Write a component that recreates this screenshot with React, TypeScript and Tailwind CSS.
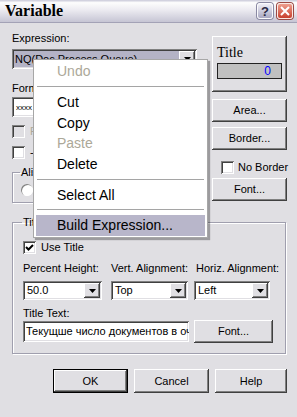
import React from 'react'

const raised =
  'shadow-[inset_-1px_-1px_0_#404040,inset_1px_1px_0_#ffffff,inset_-2px_-2px_0_#808080,inset_2px_2px_0_#e0dfe3]'
const sunken =
  'shadow-[inset_1px_1px_0_#808080,inset_-1px_-1px_0_#ffffff,inset_2px_2px_0_#404040,inset_-2px_-2px_0_#e0dfe3]'

function Button({ label, className = '' }: { label: string; className?: string }) {
  return (
    <div className={`flex h-[23px] items-center justify-center bg-[#e0dfe3] ${raised} ${className}`}>
      {label}
    </div>
  )
}

function Arrow() {
  return (
    <div className={`flex h-full w-[16px] items-center justify-center bg-[#e0dfe3] ${raised}`}>
      <svg width="7" height="4" viewBox="0 0 7 4">
        <path d="M0 0h7L3.5 4z" fill="#000" />
      </svg>
    </div>
  )
}

function Combo({ value, className = '' }: { value: string; className?: string }) {
  return (
    <div className={`flex h-[19px] bg-white p-[2px] ${sunken} ${className}`}>
      <div className="flex flex-1 items-center pl-[2px]">{value}</div>
      <Arrow />
    </div>
  )
}

function Check({ checked = false, disabled = false }: { checked?: boolean; disabled?: boolean }) {
  return (
    <div
      className={`flex h-[13px] w-[13px] shrink-0 items-center justify-center ${
        disabled ? 'bg-[#e0dfe3]' : 'bg-white'
      } ${sunken}`}
    >
      {checked && (
        <svg width="9" height="9" viewBox="0 0 9 9">
          <path d="M1 4l2.5 2.5L8 2" stroke="#000" strokeWidth="2" fill="none" />
        </svg>
      )}
    </div>
  )
}

function MenuItem({ label, disabled = false, active = false }: { label: string; disabled?: boolean; active?: boolean }) {
  return (
    <div
      className={`mx-[2px] flex h-[20.67px] items-center pl-[21px] ${disabled ? 'text-[#aca899]' : 'text-black'} ${
        active ? 'bg-[#b8b6ca]' : ''
      }`}
    >
      {label}
    </div>
  )
}

function Sep() {
  return (
    <div className="flex h-[10px] items-center px-[3px]">
      <div className="h-px w-full bg-[#a5a5a5]" />
    </div>
  )
}

export default function App() {
  return (
    <div className="relative h-[417px] w-[297px] overflow-hidden bg-[#e0dfe3] font-['Liberation_Sans',Arial,sans-serif] text-[11px] leading-[13px] text-black">
      {/* title bar */}
      <div className="flex h-[23px] items-center justify-between border-b border-[#a3a2b6] bg-[linear-gradient(#c8c8d8,#fdfdfd_12%,#ecebf1_45%,#c6c5d4)] pl-[5px] pr-[4px]">
        <span className="font-['Liberation_Serif',serif] text-[16px] font-bold leading-none">Variable</span>
        <div className="flex gap-[4px]">
          <div className="flex h-[16px] w-[16px] items-center justify-center rounded-[3px] border border-[#fafafc] bg-[linear-gradient(#eeeef6,#a9a8c2)] text-[13px] font-bold leading-none text-[#2a2a44] shadow-[0_0_0_1px_#8a89a3]">
            ?
          </div>
          <div className="flex h-[16px] w-[16px] items-center justify-center rounded-[3px] border border-[#fbe9e4] bg-[linear-gradient(#ee9f8e,#c8402e)] shadow-[0_0_0_1px_#9a4a44]">
            <svg width="10" height="10" viewBox="0 0 10 10">
              <path d="M1 1l8 8M9 1l-8 8" stroke="#fff" strokeWidth="2" />
            </svg>
          </div>
        </div>
      </div>

      {/* top section */}
      <div className="flex pl-[12px]">
        <div className="w-[185px]">
          <div className="mt-[9px]">Expression:</div>
          <div className={`mt-[4px] flex h-[20px] bg-white p-[2px] ${sunken}`}>
            <div className="flex flex-1 items-center bg-[#b4b3c6] pl-[1px]">NQ(Doc Process Queue)</div>
            <Arrow />
          </div>
          <div className="mt-[13px]">Format:</div>
          <div className={`mt-[2px] flex h-[20px] items-center bg-white pl-[4px] text-[8px] ${sunken}`}>xxxx</div>
          <div className="mt-[8px] flex items-center gap-[5px]">
            <Check disabled />
            <span className="text-[#aca899]">Fixed Width</span>
          </div>
          <div className="mt-[8px] flex items-center gap-[5px]">
            <Check />
            <span>- Trim</span>
          </div>
          <fieldset className="mt-[7px] h-[37px] border border-[#a09fae] pl-[8px] shadow-[1px_1px_0_#ffffff,inset_1px_1px_0_#ffffff]">
            <legend className="-ml-[1px] px-[1px]">Alignment</legend>
            <div className="mt-[4px] flex items-center gap-[5px]">
              <div className="h-[12px] w-[12px] rounded-full bg-white shadow-[inset_1px_1px_0_#808080,inset_-1px_-1px_0_#ffffff]" />
              <span>Left</span>
            </div>
          </fieldset>
        </div>

        <div className="ml-[15px] w-[75px]">
          <div className={`mt-[13px] h-[56px] pl-[5px] pt-[9px] ${raised}`}>
            <div className="font-['Liberation_Serif',serif] text-[14px] leading-[16px]">Title</div>
            <div className="mt-[2px] h-[16px] w-[65px] border border-[#222] bg-[#c0c0c0] pr-[10px] text-right text-[12px] leading-[14px] text-[#0000ff]">
              0
            </div>
          </div>
          <Button label="Area..." className="mt-[7px]" />
          <Button label="Border..." className="mt-[5px]" />
          <div className="ml-[9px] mt-[11px] flex items-center gap-[4px] whitespace-nowrap">
            <Check />
            <span>No Border</span>
          </div>
          <Button label="Font..." className="mt-[4px]" />
        </div>
      </div>

      {/* title group */}
      <fieldset className="ml-[12px] mt-[13px] w-[274px] border border-[#a09fae] pb-[10px] pl-[10px] shadow-[1px_1px_0_#ffffff,inset_1px_1px_0_#ffffff]">
        <legend className="-ml-[1px] px-[1px]">Title</legend>
        <div className="mt-[12px] flex items-center gap-[5px]">
          <Check checked />
          <span>Use Title</span>
        </div>
        <div className="mt-[8px] flex">
          <div className="w-[88px]">Percent Height:</div>
          <div className="w-[85px]">Vert. Alignment:</div>
          <div>Horiz. Alignment:</div>
        </div>
        <div className="mt-[6px] flex">
          <Combo value="50.0" className="w-[79px]" />
          <Combo value="Top" className="ml-[9px] w-[77px]" />
          <Combo value="Left" className="ml-[6px] w-[76px]" />
        </div>
        <div className="mt-[7px]">Title Text:</div>
        <div className="flex items-center">
          <div className={`flex h-[21px] w-[166px] items-center overflow-hidden whitespace-nowrap bg-white pl-[3px] ${sunken}`}>
            Текущше число документов в очереди
          </div>
          <Button label="Font..." className="ml-[5px] w-[79px]" />
        </div>
      </fieldset>

      {/* dialog buttons */}
      <div className="mt-[15px] flex gap-[6px] pl-[53px]">
        <div className="h-[24px] w-[75px] border border-black">
          <Button label="OK" className="h-full" />
        </div>
        <Button label="Cancel" className="h-[24px] w-[75px]" />
        <Button label="Help" className="h-[24px] w-[72px]" />
      </div>

      {/* context menu */}
      <div className="absolute left-[33px] top-[59px] w-[175px] border border-[#a7a7a7] bg-white py-[1px] text-[14px] leading-[16px] shadow-[2px_2px_1px_rgba(0,0,0,0.3)]">
        <MenuItem label="Undo" disabled />
        <Sep />
        <MenuItem label="Cut" />
        <MenuItem label="Copy" />
        <MenuItem label="Paste" disabled />
        <MenuItem label="Delete" />
        <Sep />
        <MenuItem label="Select All" />
        <Sep />
        <MenuItem label="Build Expression..." active />
      </div>
    </div>
  )
}
